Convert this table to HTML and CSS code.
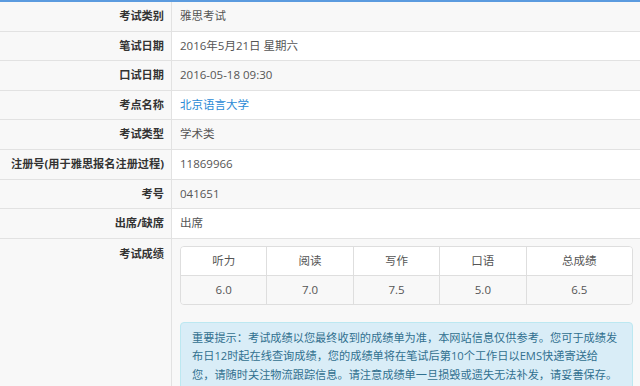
FILE: index.html
```html
<!DOCTYPE html>
<html lang="zh-CN">
<head>
<meta charset="utf-8">
<title>成绩查询</title>
<link rel="stylesheet" href="styles.css">
</head>
<body>
<table class="info">
  <tbody>
    <tr><th>考试类别</th><td>雅思考试</td></tr>
    <tr><th>笔试日期</th><td>2016年5月21日 星期六</td></tr>
    <tr><th>口试日期</th><td>2016-05-18 09:30</td></tr>
    <tr><th>考点名称</th><td><a class="link" href="#">北京语言大学</a></td></tr>
    <tr><th>考试类型</th><td>学术类</td></tr>
    <tr><th>注册号(用于雅思报名注册过程)</th><td>11869966</td></tr>
    <tr><th>考号</th><td>041651</td></tr>
    <tr><th>出席/缺席</th><td>出席</td></tr>
    <tr class="score-row">
      <th>考试成绩</th>
      <td>
        <div class="scores">
          <div class="sc-row sc-head">
            <div class="sc">听力</div><div class="sc">阅读</div><div class="sc">写作</div><div class="sc">口语</div><div class="sc sc-total">总成绩</div>
          </div>
          <div class="sc-row sc-vals">
            <div class="sc">6.0</div><div class="sc">7.0</div><div class="sc">7.5</div><div class="sc">5.0</div><div class="sc sc-total">6.5</div>
          </div>
        </div>
        <div class="alert">重要提示：考试成绩以您最终收到的成绩单为准，本网站信息仅供参考。您可于成绩发布日12时起在线查询成绩，您的成绩单将在笔试后第10个工作日以EMS快递寄送给您，请随时关注物流跟踪信息。请注意成绩单一旦损毁或遗失无法补发，请妥善保存。</div>
      </td>
    </tr>
  </tbody>
</table>
</body>
</html>
```

FILE: styles.css
```css
html, body {
  margin: 0;
  padding: 0;
  background: #fff;
}
body {
  font-family: "Open Sans", "Noto Sans CJK SC", sans-serif;
  font-size: 11.5px;
  color: #555;
}
.info {
  width: 100%;
  border-collapse: collapse;
  table-layout: fixed;
  border-top: 2px solid #5b9bdf;
}
.info th,
.info td {
  padding: 6px 7px 6px 8px;
  line-height: 16.6px;
  border-bottom: 1px solid #e2e2e2;
  vertical-align: top;
  text-align: left;
}
.info th {
  width: 164px;
  text-align: right;
  font-size: 11.2px;
  font-weight: bold;
  color: #333;
  background: #f8f8f8;
  border-right: 1px solid #e2e2e2;
  white-space: nowrap;
  padding-left: 0;
  padding-right: 7px;
  box-sizing: content-box;
}
.info tr:nth-child(odd) td {
  background: #f8f8f8;
}
.info td {
  background: #fff;
}
.link {
  color: #2a8ad6;
  text-decoration: none;
}
.score-row th,
.score-row td {
  padding-top: 7px;
  border-bottom: none;
}
.scores {
  border: 1px solid #dedede;
  border-radius: 4px;
  overflow: hidden;
  margin-bottom: 17px;
}
.sc-row {
  display: flex;
}
.sc-head {
  background: #fff;
  border-bottom: 1px solid #dedede;
}
.sc-vals {
  background: #f8f8f8;
}
.sc {
  width: 85.4px;
  flex: none;
  text-align: center;
  line-height: 16px;
  padding: 6px 0;
  border-right: 1px solid #dedede;
  color: #555;
}
.sc.sc-total {
  flex: 1;
  border-right: none;
}
.alert {
  background: #d9edf7;
  border: 1px solid #bce8f1;
  border-radius: 4px;
  color: #31708f;
  font-size: 11.2px;
  line-height: 18.5px;
  padding: 6px 13px 6px 11px;
}
```
